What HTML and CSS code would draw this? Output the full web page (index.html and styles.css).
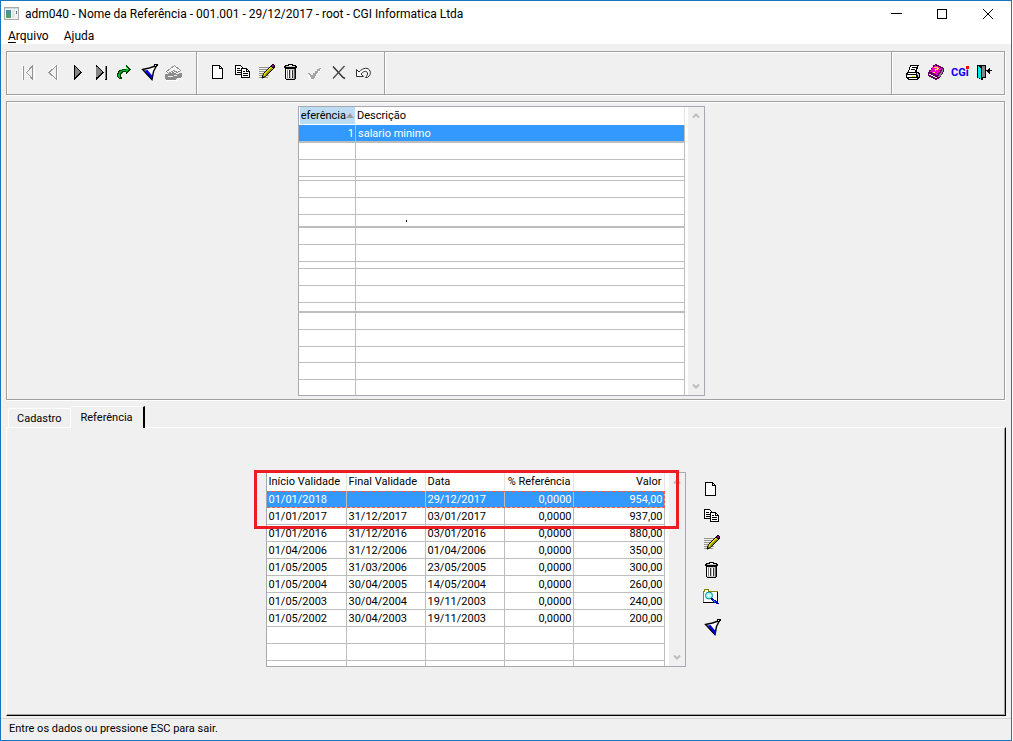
FILE: index.html
```html
<!DOCTYPE html>
<html lang="pt-BR">
<head>
<meta charset="utf-8">
<title>adm040 - Nome da Referência</title>
<link rel="stylesheet" href="styles.css">
</head>
<body>
<svg class="defs" aria-hidden="true">
  <symbol id="i-doc" viewBox="0 0 20 20">
    <path d="M4.5 2.5h7l3 3v10h-10z" fill="#fff" stroke="#000"/><path d="M11.5 2.5v3h3" fill="none" stroke="#000"/>
  </symbol>
  <symbol id="i-copy" viewBox="0 0 20 20">
    <path d="M3.5 2.5h5l2 2v7h-7z" fill="#fff" stroke="#000"/><path d="M5 5.5h3M5 7.5h4M5 9.5h4" stroke="#000"/>
    <path d="M9.5 5.5h5l3 3v6h-8z" fill="#fff" stroke="#000"/><path d="M14.5 5.5v3h3M11 8.5h2M11 10.5h5M11 12.5h5" fill="none" stroke="#000"/>
  </symbol>
  <symbol id="i-edit" viewBox="0 0 20 20">
    <path d="M3 4.5h10M3 6.5h9M3 8.5h8M3 10.5h7M3 12.5h10M3 14.5h9" stroke="#949494"/>
    <g shape-rendering="auto"><path d="M6 15l1.500-4.500 8-8 2.500 2.500-8 8z" fill="#e8dc00" stroke="#000"/>
    <path d="M9.500 12l6.500-6.500" stroke="#848400" stroke-width="1.500"/><path d="M6 15.500l.8-2.500 1.700 1.500z" fill="#000"/></g>
    <path d="M15 2h1v-1h2v1h1v3h-1v1h-1v-1h-1v-1h-1z" fill="#000"/><path d="M16 2h2v2h-2z" fill="#840084"/>
  </symbol>
  <symbol id="i-trash" viewBox="0 0 20 20">
    <path d="M8 1h5v1h3v1h1v2h-13v-2h1v-1h3z" fill="#000"/><path d="M6 3h9v1h-9z" fill="#c6c6c6"/><path d="M9 2h3v1h-3z" fill="#fff"/>
    <path d="M5 5h11v11h-1v1h-9v-1h-1z" fill="#000"/><path d="M6 6h9v10h-9z" fill="#c6c6c6"/><path d="M6 6h1v9h-1zM8 7h1v8h-1zM11 7h1v8h-1z" fill="#fff"/><path d="M7 7h1v8h-1z" fill="#848484"/><path d="M9 7h1v8h-1zM12 7h1v8h-1z" fill="#303030"/><path d="M14 6h1v10h-1z" fill="#606060"/>
  </symbol>
  <symbol id="i-filter" viewBox="0 0 20 20">
    <g shape-rendering="auto"><path d="M4.500 6.500l7-1.500 7-2.500-3 6-1.500 8z" fill="#fff" stroke="#000" stroke-width="1.400"/>
    <path d="M6.500 7.500l3-.5 5 6-.500 4z" fill="#0000e0"/><path d="M5 6.500l8.500 10" stroke="#000"/></g>
    <path d="M16 1h4v2h-1v1h-3z" fill="#000"/><path d="M17 2h1v1h-1z" fill="#fff"/>
  </symbol>
  <symbol id="i-first" viewBox="0 0 20 20">
    <path d="M4 2h1v15h-1zM13 3l-6 7 7 7" fill="#fff" stroke="none"/><path d="M5 3h1v14h-1z" fill="#949494"/>
    <path d="M14.500 3L8.500 9.500l6 6.500z" fill="#f0f0f0" stroke="#949494"/><path d="M16.500 3v14" stroke="#fff"/>
  </symbol>
  <symbol id="i-prev" viewBox="0 0 20 20">
    <path d="M13.500 2L6.500 9" stroke="#fff" fill="none"/><path d="M14.500 2.500L7 9.500l7.500 7z" fill="#f0f0f0" stroke="#949494"/><path d="M15.500 3v14" stroke="#fff"/>
  </symbol>
  <symbol id="i-next" viewBox="0 0 20 20">
    <path d="M8 2h1v1h1v1h1v1h1v1h1v1h1v1h1v1h1v1h-1v1h-1v1h-1v1h-1v1h-1v1h-1v1h-1v1h-1z" fill="#000"/><path d="M9 4h1v1h1v1h1v1h1v1h1v2h-1v1h-1v1h-1v1h-1v1h-1z" fill="#848484"/>
  </symbol>
  <symbol id="i-last" viewBox="0 0 20 20">
    <path d="M6 2h1v1h1v1h1v1h1v1h1v1h1v1h1v1h1v1h-1v1h-1v1h-1v1h-1v1h-1v1h-1v1h-1v1h-1z" fill="#000"/><path d="M6 4h2v1h1v1h1v1h1v1h1v2h-1v1h-1v1h-1v1h-1v1h-2z" fill="#848484"/><path d="M15 3h2v14h-2z" fill="#000"/><path d="M15 3h1v13h-1z" fill="#848484"/>
  </symbol>
  <symbol id="i-go" viewBox="0 0 20 20">
    <path d="M12 2h1v1h1v1h1v1h1v1h1v1h-1v1h-1v1h-1v1h-1v1h-1v-2h-3v1h-1v1h-1v3h1v2h-3v-1h-1v-1h-1v-4h1v-2h1v-1h2v-1h5z" fill="#003c00"/>
    <path d="M12 4h1v1h1v1h1v1h-1v1h-1v1h-1v-1h-4v1h-1v1h-1v5h-1v-1h-1v-3h1v-2h1v-1h2v-1h4z" fill="#00b53c"/><path d="M12 4h1v1h1v1h-6v1h-2v-1h6z" fill="#84ff84"/>
  </symbol>
  <symbol id="i-clear" viewBox="0 0 20 20">
    <path d="M4.500 8.500l8-6 6 5-3 2-4-2-5 3z" fill="#f4f4f4" stroke="#949494"/>
    <path d="M3 11h4v-1h3v-1h2v1h2v1h3v-1h3v4h-1v1h-4v1h-1v1h-10v-1h-1z" fill="#8c8c8c"/><path d="M12 12h3v1h-3zM6 13h5v1h-5z" fill="#f0f0f0"/><path d="M5 17h10v1h-10zM15 15h5v1h-5z" fill="#fff"/>
  </symbol>
  <symbol id="i-check" viewBox="0 0 20 20">
    <path d="M4 12h2v1l3-1 8-7v2l-4 4-4 6h-2l-3-4z" fill="#fff"/>
    <path d="M3 10h3v1h1v1h2v-2h2v-2h2v-2h2v-1h2v1h-1v2h-2v2h-1v1h-1v2h-1v2h-1v1h-3v-2h-1v-2h-1z" fill="#a5a5a5"/>
  </symbol>
  <symbol id="i-x" viewBox="0 0 20 20">
    <g shape-rendering="auto"><path d="M5 3.500l10 11 2 1" fill="none" stroke="#303030" stroke-width="1.500"/><path d="M16.500 3L5 15.500" stroke="#484848" stroke-width="1.200"/></g>
  </symbol>
  <symbol id="i-undo" viewBox="0 0 20 20">
    <path d="M4.500 6.500v7h7l-2.500-2.500C11 8 15 7.500 15.500 10c.3 1.500-.5 3-2 4.500h2c2.500-2 3.500-4 2.500-6.500C16.500 4 11 4.500 7 9z" fill="#fff" stroke="#303030" shape-rendering="auto"/>
  </symbol>
  <symbol id="i-print" viewBox="0 0 20 20">
    <path d="M8 2h9v1h-1v3h-1v3h2v1h1v5h-1v1h-1v1h-10v-1h-1v-1h-1v-5h1v-1h1v-2h1v-3h1z" fill="#000"/>
    <path d="M9 3h6v1h-1v3h-1v2h-6v-2h1v-3h1z" fill="#fff"/><path d="M10 4.500h4M9 6.500h4" stroke="#000"/>
    <path d="M6 10h8v1h-8zM5 12h9v2h-9z" fill="#fff"/><path d="M10 13h3v1h-3z" fill="#e7e700"/><path d="M7 15h8v1h-8z" fill="#fff"/><path d="M15 10h1v2h-1zM16 11h1v3h-1z" fill="#c6c6c6"/>
  </symbol>
  <symbol id="i-book" viewBox="0 0 20 20">
    <path d="M9 1h2v1h2v1h2v1h2v1h1v4h-1v2h-1v1h-1v2h-1v1h-1v1h-2v1h-2v-1h-2v-1h-2v-1h-2v-1h-1v-4h1v-2h2v-2h1v-1h1v-2h2z" fill="#600060"/>
    <path d="M9 2h1v1h2v1h2v1h2v1h-1v1h-1v2h-1v1h-1v2h-2v-1h-2v-1h-2v-1h-2v-1h1v-2h1v-2h2v-1h1z" fill="#f000c8"/>
    <path d="M3 11h2v1h2v1h2v1h2v1h-2v-1h-2v-1h-2v-1h-2z" fill="#fff"/><path d="M12 13h1v-2h1v-1h1v-2h1v-2h1v3h-1v2h-1v2h-1v1h-2z" fill="#848484"/>
    <path d="M8 4h4v1h1v1h-1v1h-2v1h-1v-2h2v-1h-3zM7 9h2v1h-2z" fill="#ffff00"/>
  </symbol>
  <symbol id="i-exit" viewBox="0 0 20 20">
    <path d="M3 2h9v13h-3v2h-2v-1h-2v-1h-2z" fill="#000"/><path d="M8 3h3v11h-3z" fill="#848484"/><path d="M4 3h1v1h1v1h1v11h-1v-1h-2z" fill="#00e7e7"/>
    <path d="M15 5h1v2h2v1h-2v3h-1v-1h-1v-1h-1v-1h-1v-1h2v-1h1z" fill="#000"/>
  </symbol>
  <symbol id="i-search" viewBox="0 0 20 20">
    <path d="M2.500 14.500v-11h1v-2h4v2h9v11z" fill="#fff" stroke="#848400"/><path d="M2 14h15v1h-15zM16 4h1v11h-1z" fill="#000"/>
    <circle cx="8" cy="7.500" r="3.500" fill="#9ff" stroke="#008484" shape-rendering="auto"/><path d="M7 6h1v1h1v1h-1v1h-1v-1h-1v-1h1z" fill="#fff"/>
    <path d="M10 10h2v1h1v1h2v1h2v2h1v1h-3v-1h-2v-1h-1v-1h-1v-1h-1z" fill="#0000b0"/><path d="M12 12h1v1h1v1h-1v-1h-1z" fill="#00c6ff"/>
  </symbol>
  <symbol id="i-up" viewBox="0 0 8 8"><path d="M1 5.500L4 2.500l3 3" fill="none" stroke="#bdbdbd" stroke-width="2"/></symbol>
  <symbol id="i-down" viewBox="0 0 8 8"><path d="M1 2.500L4 5.500l3-3" fill="none" stroke="#bdbdbd" stroke-width="2"/></symbol>
</svg>

<div class="window">
  <header class="titlebar">
    <svg class="app-icon" viewBox="0 0 16 14"><path d="M.5.500h14v12h-14z" fill="#f4f4f4" stroke="#a8a8a8"/><path d="M1 1h13v1h-13z" fill="#d0d8e0"/><path d="M2 3h5v8h-5z" fill="#4a90a0"/><path d="M2 7h5v4h-5z" fill="#4fa070"/><path d="M8 3h3v8h-3z" fill="#e4e4e4"/><path d="M12 4h1v3h-1z" fill="#5a7890"/></svg>
    <h1 class="title">adm040 - Nome da Referência - 001.001 - 29/12/2017 - root - CGI Informatica Ltda</h1>
    <div class="controls">
      <button aria-label="Minimizar"><svg viewBox="0 0 12 12"><path d="M1 5.500h11" stroke="#000"/></svg></button>
      <button aria-label="Maximizar"><svg viewBox="0 0 12 12"><path d="M1.500 1.500h9v9h-9z" fill="none" stroke="#000"/></svg></button>
      <button aria-label="Fechar"><svg class="smooth" viewBox="0 0 12 12"><path d="M1 1l10 10M11 1L1 11" stroke="#000"/></svg></button>
    </div>
  </header>
  <nav class="menubar"><button><u>A</u>rquivo</button><button>Ajuda</button></nav>

  <div class="toolbar">
    <div class="group">
      <button aria-label="Primeiro" disabled><svg><use href="#i-first"/></svg></button>
      <button aria-label="Anterior" disabled><svg><use href="#i-prev"/></svg></button>
      <button aria-label="Próximo"><svg><use href="#i-next"/></svg></button>
      <button aria-label="Último"><svg><use href="#i-last"/></svg></button>
      <button aria-label="Ir para"><svg><use href="#i-go"/></svg></button>
      <button aria-label="Filtrar"><svg><use href="#i-filter"/></svg></button>
      <button aria-label="Limpar filtro" disabled><svg><use href="#i-clear"/></svg></button>
    </div>
    <div class="group group-edit">
      <button aria-label="Novo"><svg><use href="#i-doc"/></svg></button>
      <button aria-label="Copiar"><svg><use href="#i-copy"/></svg></button>
      <button aria-label="Editar"><svg><use href="#i-edit"/></svg></button>
      <button aria-label="Excluir"><svg><use href="#i-trash"/></svg></button>
      <button aria-label="Confirmar" disabled><svg><use href="#i-check"/></svg></button>
      <button aria-label="Cancelar"><svg><use href="#i-x"/></svg></button>
      <button aria-label="Desfazer"><svg><use href="#i-undo"/></svg></button>
    </div>
    <div class="group group-fill"></div>
    <div class="group group-end">
      <button aria-label="Imprimir"><svg><use href="#i-print"/></svg></button>
      <button aria-label="Manual"><svg><use href="#i-book"/></svg></button>
      <button aria-label="Sobre"><svg viewBox="0 0 20 20"><text class="cgi-text" x="1" y="13">CGi</text><path d="M16 3h3v3h-3z" fill="#f00"/></svg></button>
      <button aria-label="Sair"><svg><use href="#i-exit"/></svg></button>
    </div>
  </div>

  <section class="list-panel">
    <div class="grid">
      <table class="names">
        <colgroup><col class="w-code"><col class="w-desc"></colgroup>
        <thead><tr><th><div class="sorted"><div class="clip"><span>eferência</span></div><i class="sort-mark"></i></div></th><th>Descrição</th></tr></thead>
        <tbody>
          <tr class="selected thick"><td class="num">1</td><td>salario minimo</td></tr>
          <tr><td></td><td></td></tr>
          <tr><td></td><td></td></tr>
          <tr class="cut-4"><td></td><td></td></tr>
          <tr><td></td><td></td></tr>
          <tr><td></td><td></td></tr>
          <tr class="cut-13 thick"><td></td><td><i class="caret"></i></td></tr>
          <tr><td></td><td></td></tr>
          <tr><td></td><td></td></tr>
          <tr class="cut-7"><td></td><td></td></tr>
          <tr><td></td><td></td></tr>
          <tr><td></td><td></td></tr>
          <tr class="cut-10 thick"><td></td><td></td></tr>
          <tr><td></td><td></td></tr>
          <tr><td></td><td></td></tr>
          <tr class="cut-16"><td></td><td></td></tr>
          <tr><td></td><td></td></tr>
          <tr class="cut-15 last"><td></td><td></td></tr>
        </tbody>
      </table>
      <div class="scroll"><svg><use href="#i-up"/></svg><svg><use href="#i-down"/></svg></div>
    </div>
  </section>

  <div class="tabs" role="tablist">
    <button class="tab" role="tab" aria-selected="false">Cadastro</button><button class="tab active" role="tab" aria-selected="true">Referência</button>
  </div>
  <section class="tab-panel" role="tabpanel">
    <div class="grid">
      <table class="values">
        <colgroup><col class="w-start"><col class="w-date"><col class="w-date"><col class="w-pct"><col class="w-value"></colgroup>
        <thead><tr><th>Início Validade</th><th>Final Validade</th><th>Data</th><th class="num">% Referência</th><th class="num">Valor</th></tr></thead>
        <tbody>
          <tr class="selected focus"><td>01/01/2018</td><td></td><td>29/12/2017</td><td class="num">0,0000</td><td class="num">954,00</td></tr>
          <tr><td>01/01/2017</td><td>31/12/2017</td><td>03/01/2017</td><td class="num">0,0000</td><td class="num">937,00</td></tr>
          <tr><td>01/01/2016</td><td>31/12/2016</td><td>03/01/2016</td><td class="num">0,0000</td><td class="num">880,00</td></tr>
          <tr><td>01/04/2006</td><td>31/12/2006</td><td>01/04/2006</td><td class="num">0,0000</td><td class="num">350,00</td></tr>
          <tr><td>01/05/2005</td><td>31/03/2006</td><td>23/05/2005</td><td class="num">0,0000</td><td class="num">300,00</td></tr>
          <tr><td>01/05/2004</td><td>30/04/2005</td><td>14/05/2004</td><td class="num">0,0000</td><td class="num">260,00</td></tr>
          <tr><td>01/05/2003</td><td>30/04/2004</td><td>19/11/2003</td><td class="num">0,0000</td><td class="num">240,00</td></tr>
          <tr><td>01/05/2002</td><td>30/04/2003</td><td>19/11/2003</td><td class="num">0,0000</td><td class="num">200,00</td></tr>
          <tr><td></td><td></td><td></td><td></td><td></td></tr>
          <tr><td></td><td></td><td></td><td></td><td></td></tr>
          <tr class="cut-5 last"><td></td><td></td><td></td><td></td><td></td></tr>
        </tbody>
      </table>
      <div class="scroll"><svg><use href="#i-up"/></svg><svg><use href="#i-down"/></svg></div>
      <div class="callout"></div>
    </div>
    <div class="side-tools">
      <button aria-label="Novo"><svg><use href="#i-doc"/></svg></button>
      <button aria-label="Copiar"><svg><use href="#i-copy"/></svg></button>
      <button aria-label="Editar"><svg><use href="#i-edit"/></svg></button>
      <button aria-label="Excluir"><svg><use href="#i-trash"/></svg></button>
      <button aria-label="Pesquisar"><svg><use href="#i-search"/></svg></button>
      <button class="spaced" aria-label="Filtrar"><svg><use href="#i-filter"/></svg></button>
    </div>
  </section>
  <footer class="status">Entre os dados ou pressione ESC para sair.</footer>
</div>
</body>
</html>
```
FILE: styles.css
```css
* { box-sizing: border-box; }
body {
  margin: 0;
  padding-right: 1px;
  background: #fff;
  color: #000;
  font: 11px/16px Roboto, "Liberation Sans", sans-serif;
}
button {
  margin: 0;
  padding: 0;
  border: 0;
  background: none;
  color: inherit;
  font: inherit;
}
svg { display: block; shape-rendering: crispEdges; }
.smooth { shape-rendering: auto; }
.defs { position: absolute; width: 0; height: 0; }
.cgi-text { font: bold 11px Roboto, "Liberation Sans", sans-serif; fill: #0000f0; }

.window {
  display: flex;
  flex-direction: column;
  min-height: 100vh;
  border: 1px solid #1874bc;
  background: #f0f0f0;
}

.titlebar {
  display: flex;
  align-items: center;
  height: 25px;
  padding-left: 3px;
  background: #fff;
}
.app-icon { width: 16px; height: 14px; }
.title {
  flex: 1;
  margin: 0 0 0 5px;
  font: 12px/24px Roboto, "Noto Sans", sans-serif;
  white-space: nowrap;
}
.controls { display: flex; }
.controls button {
  display: grid;
  place-items: center;
  width: 46px;
  height: 25px;
}
.controls svg { width: 12px; height: 12px; }
.menubar {
  display: flex;
  gap: 15px;
  height: 18px;
  padding-left: 7px;
  background: #fff;
  font: 12px/20px Roboto, "Noto Sans", sans-serif;
}
.menubar u { text-underline-offset: 2px; }

.toolbar, .list-panel {
  margin: 7px 6px 0 5px;
  border: 1px solid #a0a0a0;
  box-shadow: inset 1px 1px 0 #fff, 1px 1px 0 #fff;
}
.toolbar { display: flex; height: 44px; }
.group {
  display: flex;
  align-items: center;
  gap: 4px;
  padding: 0 14px 0 11px;
  border-right: 1px solid #a0a0a0;
  box-shadow: 1px 0 0 #fff;
}
.group-edit { padding-right: 12px; }
.group-fill { flex: 1; padding: 0; }
.group-end {
  padding: 0 10px;
  border-right: 0;
  box-shadow: none;
}
.group svg, .side-tools svg { width: 20px; height: 20px; }

.list-panel {
  display: flex;
  justify-content: center;
  margin-top: 6px;
  padding: 4px 8px 3px 0;
}
.grid {
  position: relative;
  display: flex;
  border: 1px solid #a8a8b0;
  background: #fff;
}
table {
  table-layout: fixed;
  border-spacing: 0;
}
.names { width: 386px; }
.values { width: 398px; }
.w-code { width: 57px; }
.w-desc { width: 329px; }
.w-start { width: 80px; }
.w-date { width: 79px; }
.w-pct { width: 69px; }
.w-value { width: 91px; }
th, td {
  height: 17px;
  padding: 0 1px 0 2px;
  border: solid #bdbdbd;
  border-width: 0 1px 1px 0;
  text-align: left;
  line-height: 15px;
  font-weight: normal;
  white-space: nowrap;
}
th {
  height: 18px;
  border-color: #e4e4e4;
  border-bottom-color: #fff;
  line-height: 17px;
}
th.num { padding-right: 2px; }
.names th { padding-left: 1px; }
.names th:first-child { padding: 0 0 0 1px; border-color: #fff; }
.num { text-align: right; }
.selected td { background: #3399ff; color: #fff; }
.focus { outline: 1px dashed #ff5a3c; outline-offset: -1px; }
.thick td { height: 18px; border-bottom-width: 2px; }
.last td { border-bottom: 0; }
.cut-4 td { height: 4px; }
.cut-5 td { height: 5px; }
.cut-7 td { height: 7px; }
.cut-10 td { height: 10px; }
.cut-13 td { height: 13px; }
.cut-15 td { height: 15px; }
.cut-16 td { height: 16px; }
.sorted {
  display: flex;
  align-items: center;
  height: 17px;
  padding: 0 1px;
  background: #bcdcf4;
}
.clip {
  display: flex;
  flex: 1;
  justify-content: flex-end;
  min-width: 0;
  overflow: hidden;
}
.sort-mark {
  border: solid transparent;
  border-width: 0 4px 5px;
  border-bottom-color: #9c9c9c;
}
.caret {
  display: block;
  width: 1px;
  height: 2px;
  margin-left: 48px;
  background: #000;
}
.scroll {
  display: flex;
  flex-direction: column;
  align-items: center;
  justify-content: space-between;
  width: 16px;
  margin-left: 4px;
  padding: 5px 0;
  background: #f0f0f0;
}
.names + .scroll { margin-left: 3px; }
.scroll svg { width: 8px; height: 8px; shape-rendering: auto; }

.tabs {
  display: flex;
  align-items: flex-end;
  margin: 6px 6px 0 7px;
}
.tab {
  height: 19px;
  padding: 2px 8px 0;
  border: solid #fff;
  border-width: 1px 1px 0;
  border-radius: 2px 0 0 0;
}
.tab.active {
  position: relative;
  height: 22px;
  margin-bottom: -1px;
  padding: 0 10px;
  border-left: 0;
  border-right: 2px solid #000;
  background: #f0f0f0;
}
.tab-panel {
  display: flex;
  flex: 1;
  align-items: flex-start;
  justify-content: center;
  gap: 15px;
  margin: 0 5px 2px;
  padding: 44px 26px 48px 0;
  border: 1px solid;
  border-color: #fff #000 #000 #fff;
  box-shadow: inset -1px -1px 0 #a0a0a0;
}
.side-tools {
  display: flex;
  flex-direction: column;
  gap: 7px;
  padding-top: 8px;
}
.side-tools .spaced { margin-top: 3px; }
.callout {
  position: absolute;
  top: -3px;
  left: -13px;
  width: 425px;
  height: 59px;
  border: 3px solid #ed1c24;
}
.status {
  height: 22px;
  padding-left: 8px;
  border-top: 1px solid #d7d7d7;
  line-height: 20px;
}
```
